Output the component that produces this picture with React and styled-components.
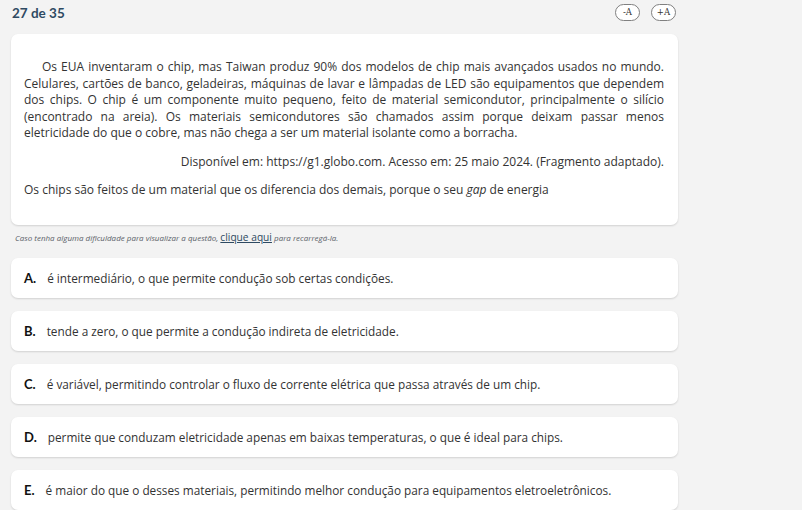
import styled, { createGlobalStyle } from "styled-components";

const GlobalStyle = createGlobalStyle`
  html, body {
    margin: 0;
    padding: 0;
    background: #f3f3f3;
  }
  body {
    font-family: "Open Sans", "Noto Sans", sans-serif;
    color: #333;
  }
`;

const options = [
  { letter: "A.", text: "é intermediário, o que permite condução sob certas condições." },
  { letter: "B.", text: "tende a zero, o que permite a condução indireta de eletricidade." },
  { letter: "C.", text: "é variável, permitindo controlar o fluxo de corrente elétrica que passa através de um chip." },
  { letter: "D.", text: "permite que conduzam eletricidade apenas em baixas temperaturas, o que é ideal para chips." },
  { letter: "E.", text: "é maior do que o desses materiais, permitindo melhor condução para equipamentos eletroeletrônicos." },
];

const App = () => {
  return (<>
    <GlobalStyle />
    <Page>
      <Header>
        <Counter>27 de 35</Counter>
        <FontButtons>
          <FontButton>-A</FontButton>
          <FontButton>+A</FontButton>
        </FontButtons>
      </Header>

      <QuestionCard>
        <Paragraph indent>
          Os EUA inventaram o chip, mas Taiwan produz 90% dos modelos de chip mais avançados usados no mundo. Celulares, cartões de banco, geladeiras, máquinas de lavar e lâmpadas de LED são equipamentos que dependem dos chips. O chip é um componente muito pequeno, feito de material semicondutor, principalmente o silício (encontrado na areia). Os materiais semicondutores são chamados assim porque deixam passar menos eletricidade do que o cobre, mas não chega a ser um material isolante como a borracha.
        </Paragraph>
        <Source>Disponível em: https://g1.globo.com. Acesso em: 25 maio 2024. (Fragmento adaptado).</Source>
        <Paragraph>
          Os chips são feitos de um material que os diferencia dos demais, porque o seu <em>gap</em> de energia
        </Paragraph>
      </QuestionCard>

      <Hint>
        Caso tenha alguma dificuldade para visualizar a questão, <HintLink>clique aqui</HintLink> para recarregá-la.
      </Hint>

      <OptionList>
        {options.map((opt) => (
          <OptionCard key={opt.letter}>
            <Letter>{opt.letter}</Letter>
            <OptionText>{opt.text}</OptionText>
          </OptionCard>
        ))}
      </OptionList>
    </Page>
  </>)
}

export default App;

const Page = styled.div`
  width: 667px;
  margin-left: 11px;
`

const Header = styled.div`
  display: flex;
  align-items: center;
  justify-content: space-between;
  height: 34px;
  padding-bottom: 9px;
  box-sizing: border-box;
`

const Counter = styled.div`
  font-family: Lato, sans-serif;
  font-size: 13.5px;
  font-weight: 700;
  color: #2e4a62;
  padding-left: 1px;
`

const FontButtons = styled.div`
  display: flex;
  gap: 11px;
  padding-right: 2px;
`

const FontButton = styled.button`
  width: 25px;
  height: 17px;
  padding: 0;
  border: 1px solid #808080;
  border-radius: 9px;
  background: #fff;
  font-family: "DejaVu Serif", serif;
  font-size: 8.5px;
  color: #333;
  line-height: 15px;
`

const QuestionCard = styled.div`
  background: #fff;
  border-radius: 7px;
  box-shadow: 0 1px 2px rgba(0, 0, 0, 0.14);
  padding: 13px 14px 14px 13px;
  height: 191px;
  box-sizing: border-box;
`

const Paragraph = styled.p`
  margin: 12px 0;
  font-size: 12px;
  line-height: 16.5px;
  text-align: justify;
  text-indent: ${(p) => (p.indent ? "18px" : "0")};
  color: #333;
`

const Source = styled.p`
  margin: 12px 0;
  font-size: 12px;
  line-height: 16.5px;
  text-align: right;
  color: #333;
`

const Hint = styled.div`
  height: 33px;
  padding: 5px 0 0 4px;
  box-sizing: border-box;
  font-size: 8px;
  font-style: italic;
  color: #5a5f68;
`

const HintLink = styled.span`
  font-style: normal;
  font-size: 10.2px;
  color: #2e4a62;
  text-decoration: underline;
`

const OptionList = styled.div`
  display: flex;
  flex-direction: column;
  gap: 13px;
`

const OptionCard = styled.div`
  display: flex;
  align-items: center;
  height: 40px;
  padding-left: 13px;
  background: #fff;
  border-radius: 7px;
  box-shadow: 0 1px 2px rgba(0, 0, 0, 0.14);
`

const Letter = styled.span`
  font-family: Lato, sans-serif;
  font-size: 13px;
  font-weight: 700;
  color: #111;
  margin-right: 11px;
`

const OptionText = styled.span`
  font-size: 11.8px;
  color: #333;
`
